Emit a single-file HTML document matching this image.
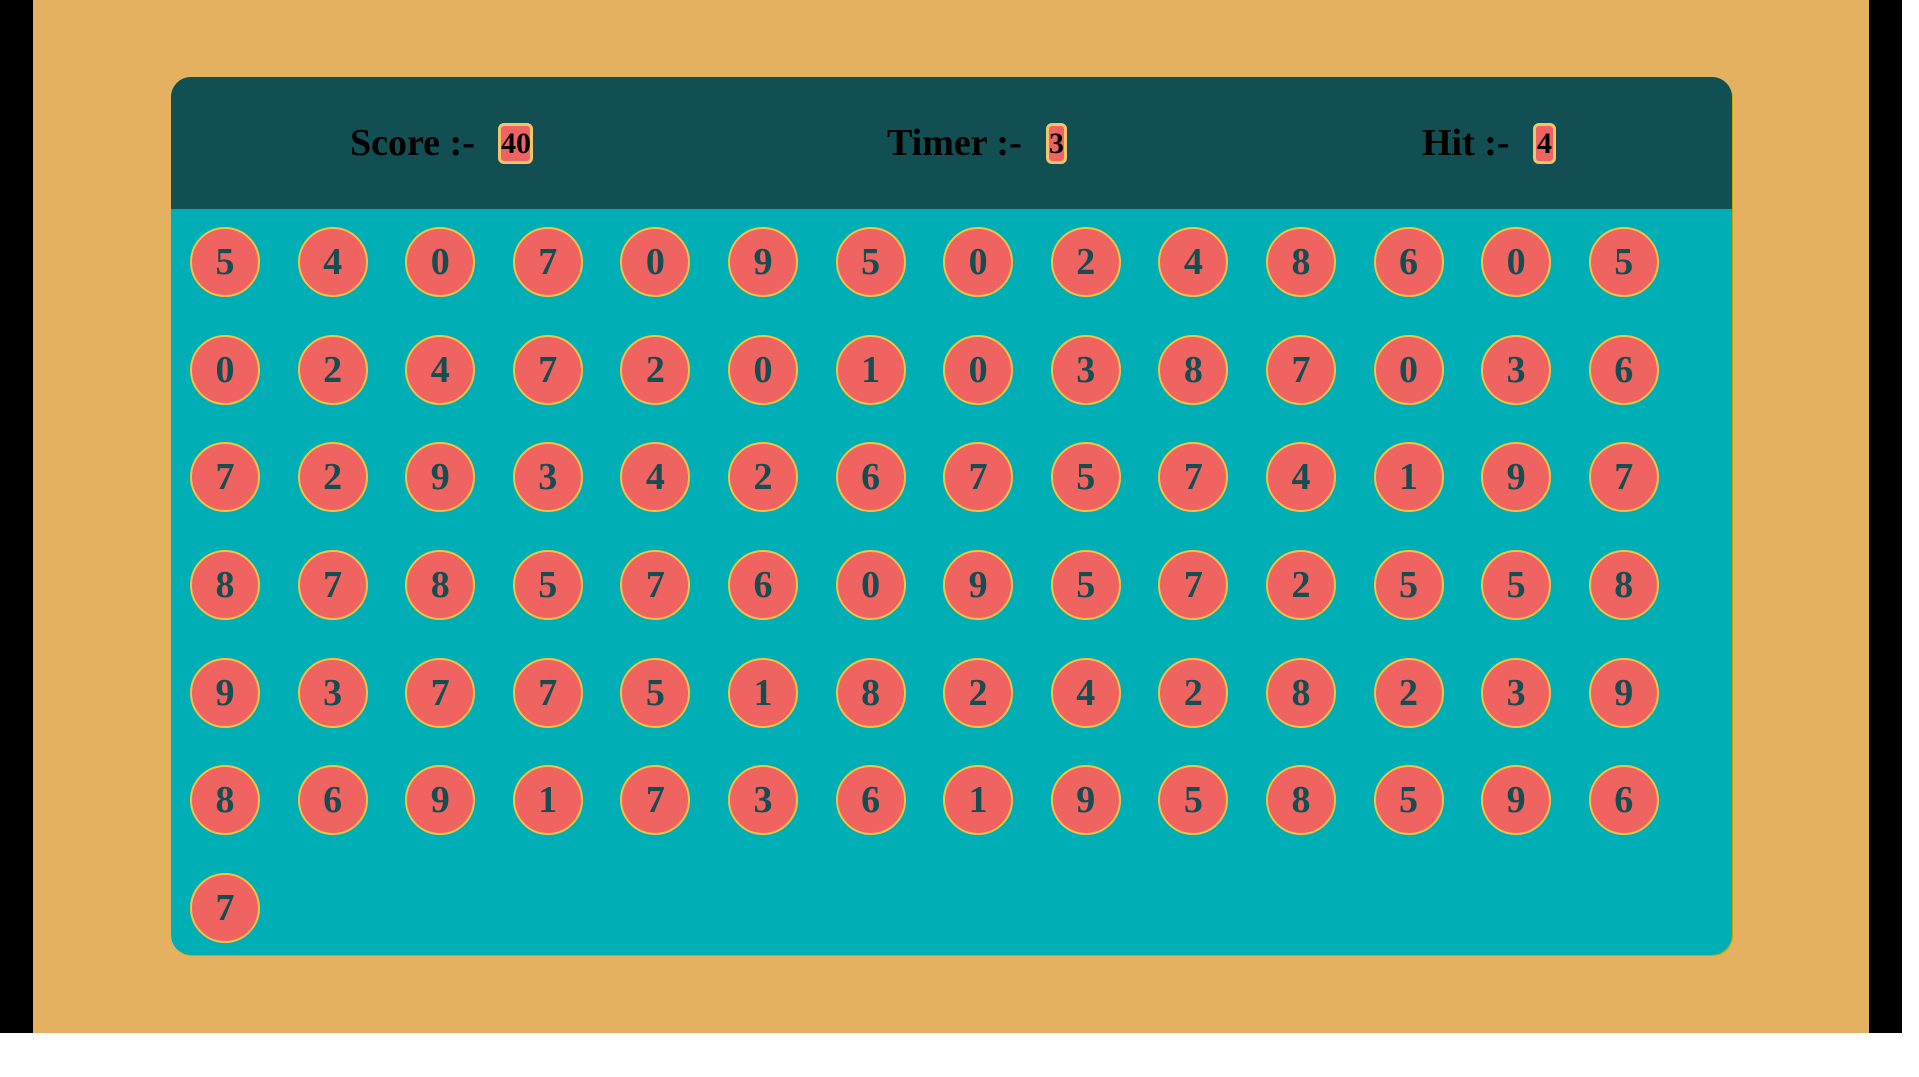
<!DOCTYPE html>
<html><head><style>
html,body{margin:0;padding:0;width:1919px;height:1077px;background:#fff;overflow:hidden}
.bg{position:absolute;left:0;top:0;width:1902px;height:1033px;background:#000}
.or{position:absolute;left:33px;top:0;width:1836px;height:1033px;background:#e3b160}
.panel{position:absolute;left:171px;top:77px;width:1561px;height:878px;border-radius:20px;background:#00afb5;overflow:hidden;box-shadow:1px 1px 0 #c9a800}
.head{position:absolute;left:0;top:0;width:100%;height:132px;background:#124f52}
.it{position:absolute;top:120px;font:bold 38px "Liberation Serif",serif;color:#000;line-height:46px;white-space:nowrap}
.box{position:absolute;top:123px;height:35px;border:3px solid #f2c46d;border-radius:6px;background:#ef6461;font:bold 30px "Liberation Serif",serif;color:#000;line-height:35px;text-align:center}
.grid{position:absolute;left:19px;top:150px;display:grid;grid-template-columns:repeat(14,70px);column-gap:37.6px;row-gap:37.7px}
.c{width:66px;height:66px;border:2px solid #f5c242;border-radius:50%;background:#ef6461;color:#144d52;font:bold 38px "Liberation Serif",serif;line-height:66px;text-align:center}
</style></head><body>
<div class="bg"></div><div class="or"></div>
<div class="panel"><div class="head"></div>
<div class="grid">
<div class="c">5</div><div class="c">4</div><div class="c">0</div><div class="c">7</div><div class="c">0</div><div class="c">9</div><div class="c">5</div><div class="c">0</div><div class="c">2</div><div class="c">4</div><div class="c">8</div><div class="c">6</div><div class="c">0</div><div class="c">5</div>
<div class="c">0</div><div class="c">2</div><div class="c">4</div><div class="c">7</div><div class="c">2</div><div class="c">0</div><div class="c">1</div><div class="c">0</div><div class="c">3</div><div class="c">8</div><div class="c">7</div><div class="c">0</div><div class="c">3</div><div class="c">6</div>
<div class="c">7</div><div class="c">2</div><div class="c">9</div><div class="c">3</div><div class="c">4</div><div class="c">2</div><div class="c">6</div><div class="c">7</div><div class="c">5</div><div class="c">7</div><div class="c">4</div><div class="c">1</div><div class="c">9</div><div class="c">7</div>
<div class="c">8</div><div class="c">7</div><div class="c">8</div><div class="c">5</div><div class="c">7</div><div class="c">6</div><div class="c">0</div><div class="c">9</div><div class="c">5</div><div class="c">7</div><div class="c">2</div><div class="c">5</div><div class="c">5</div><div class="c">8</div>
<div class="c">9</div><div class="c">3</div><div class="c">7</div><div class="c">7</div><div class="c">5</div><div class="c">1</div><div class="c">8</div><div class="c">2</div><div class="c">4</div><div class="c">2</div><div class="c">8</div><div class="c">2</div><div class="c">3</div><div class="c">9</div>
<div class="c">8</div><div class="c">6</div><div class="c">9</div><div class="c">1</div><div class="c">7</div><div class="c">3</div><div class="c">6</div><div class="c">1</div><div class="c">9</div><div class="c">5</div><div class="c">8</div><div class="c">5</div><div class="c">9</div><div class="c">6</div>
<div class="c">7</div>
</div></div>
<div class="it" style="left:350px">Score :-</div>
<div class="box" style="left:498px;width:29px">40</div>
<div class="it" style="left:887px">Timer :-</div>
<div class="box" style="left:1046px;width:15px">3</div>
<div class="it" style="left:1422px">Hit :-</div>
<div class="box" style="left:1533px;width:17px">4</div>
</body></html>
